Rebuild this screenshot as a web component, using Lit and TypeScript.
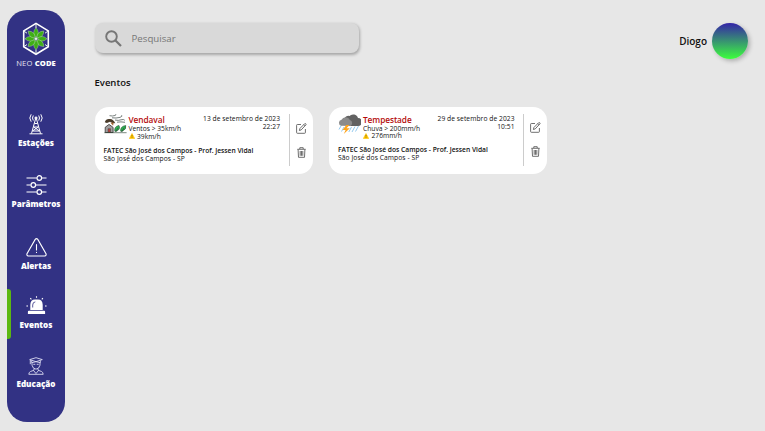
import { LitElement, html, svg, css } from "lit";
import { customElement, property } from "lit/decorators.js";

const icons: Record<string, unknown> = {
  logo: html`<svg width="28" height="34" viewBox="0 0 28 34" fill="none">
    <path d="M14 1.400 26.300 8.900v15.800L14 32.200 1.700 24.700V8.900Z" stroke="#fff" stroke-width="1.600" />
    <path d="M14 2v4M14 31.600v-4M2 24.500l3-2M2 9.200l3 2M26 9.200l-3 2M26 24.500l-3-2" stroke="#e8f3e8" />
    ${[0, 45, 90, 135, 180, 225, 270, 315].map(
      (a) => svg`<path transform="rotate(${a} 14 16.800)" d="M14 15.500Q9.300 11 14 5.800Q18.700 11 14 15.500Z" fill="#3faf16" stroke="#d5efc8" stroke-width=".35"/>`
    )}
    <circle cx="14" cy="16.800" r="1.300" fill="#e5f5df" />
  </svg>`,
  tower: html`<svg width="18" height="22" viewBox="0 0 18 22" fill="none" stroke="#fff" stroke-width="1">
    <circle cx="9" cy="5" r="1.100" fill="#fff" />
    <path d="M6.300 2.500Q4.700 5 6.300 7.500M11.700 2.500Q13.300 5 11.700 7.500M4.200 1.300Q1.400 5 4.200 8.700M13.800 1.300Q16.600 5 13.800 8.700" />
    <path d="M8.500 6 4.500 20.500M9.500 6 13.500 20.500M7.500 10.500h3M6.600 14h4.800M6.600 14l5.900 4M11.400 14l-5.900 4M5.500 18h7M2.500 20.800h13" />
  </svg>`,
  sliders: html`<svg width="21" height="20" viewBox="0 0 21 20" fill="none" stroke="#fff" stroke-width="1.200">
    <path d="M.5 3h10.300M15.800 3h4.700M.5 10h4.300M9.800 10h10.700M.5 17h10.300M15.800 17h4.700" />
    <circle cx="13.300" cy="3" r="2.300" /><circle cx="7.300" cy="10" r="2.300" /><circle cx="13.300" cy="17" r="2.300" />
  </svg>`,
  alert: html`<svg width="21" height="19" viewBox="0 0 21 19" fill="none" stroke="#fff" stroke-width="1.100" stroke-linecap="round">
    <path d="M9.200 1.400Q10.500-.1 11.800 1.400L20 15.700Q20.600 17.700 18.700 18H2.300Q.4 17.700 1 15.700Z" /><path d="M10.500 6.500v5.500M10.500 14.300v.2" />
  </svg>`,
  siren: html`<svg width="21" height="19" viewBox="0 0 21 19" fill="#fff">
    <path d="M2.900 14.800h15.200a1 1 0 0 1 1 1V18H1.900v-2.200a1 1 0 0 1 1-1ZM4.300 14.100V8.700Q4.500 3.700 9 3.600h3Q16.500 3.700 16.700 8.700v5.400Z" />
    <path d="M6.700 11.500V9Q6.700 6.100 9.300 5.900" stroke="#323284" stroke-width=".8" fill="none" />
    <path d="M10.500.2v1.500M4.300 2.200l1.100 1.200M16.900 2.200l-1.100 1.200M.4 10H2M19 10h1.600" stroke="#fff" stroke-width="1.100" />
  </svg>`,
  student: html`<svg width="16" height="18" viewBox="0 0 16 18" fill="none" stroke="#dcdcf2" stroke-width=".9">
    <path d="M1.700 2.600 8 .7l6.300 1.900L8 4.700ZM3.700 3.500v2.200Q8 3.700 12.300 5.700V3.500M2.300 3v4.200M4 5.500v2.700Q4.700 11.700 8 12.200 11.300 11.700 12 8.200V5.500M5.300 7.300h2M8.700 7.300h2M6 11.500v1.700L2.500 14.500Q.9 15.200.8 17.300h14.400Q15 15.200 13.500 14.500L10 13.200v-1.700M5.500 13.500 8 16.500l2.500-3" />
  </svg>`,
  search: html`<svg width="17" height="17" viewBox="0 0 17 17" fill="none" stroke="#767676" stroke-width="1.900">
    <circle cx="6.500" cy="6.500" r="5.300" /><path d="m10.500 10.500 5.500 5.500" stroke-width="2.200" />
  </svg>`,
  edit: html`<svg width="11" height="11" viewBox="0 0 11 11" fill="none" stroke="#555" stroke-width=".85">
    <path d="M5 1.500H1.400Q.6 1.500.6 2.300v7.200q0 .8.800.8h7.200q.8 0 .8-.8V6" /><path d="m3.400 7.500.5-2L8.700.7q.6-.4 1.100.1t.1 1.100L5.200 6.900ZM7.800 1.600l1.300 1.300" />
  </svg>`,
  trash: html`<svg width="9" height="11" viewBox="0 0 9 11" fill="none" stroke="#555" stroke-width=".85">
    <path d="M.3 2.300h8.400M2.800 2V.7h3.400V2M1.100 2.500l.4 7.800h6l.4-7.800M3.200 4v4.800M4.500 4v4.800M5.800 4v4.800" />
  </svg>`,
  warning: html`<svg width="6" height="6" viewBox="0 0 6 6"><path d="M3 .5 5.700 5.500H.3Z" fill="#ffc400" stroke="#ffc400" stroke-width=".6" stroke-linejoin="round" /><path d="M3 1.900v1.700M3 4.200v.7" stroke="#4b3b08" stroke-width=".5" /></svg>`,
  wind: html`<svg width="23" height="20" viewBox="0 0 23 20" fill="none">
    <path d="M5.500 1.700q3 .7 5.500-.2 1.600-.9.700-1.300M8 3.800q4 .6 8-.4 2.600-.9 1.700-2.200M11 6q3.500.9 6-.2 2.800-.9 3.800.5M13 8.200q4-.7 8 .1" stroke="#56605d" stroke-width=".8" />
    <path d="M.8 8.200Q2 4.400 6 5.100q3.500.2 5.300 4.100L8.300 9.100 6 7.800 2.900 9.100Z" fill="#4a3c2b" />
    <path d="m6.500 8.800 3.200-.3-.6 3.300Z" fill="#a36635" />
    <path d="M1.200 18.500v-5.200L5 10.400l4.100 3v5.100Z" fill="#a3a0a0" stroke="#333" stroke-width=".8" />
    <path d="M4 18.300v-3.600h2.500v3.600Z" fill="#b4423b" stroke="#444" stroke-width=".5" />
    <path d="M10.800 17.200Q10 12.500 15 11.500q1.800 3.700-2.500 5.700ZM16.700 17.200Q16 12.500 21.700 11.500q1.200 3.700-3.400 5.700Z" fill="#2eb352" stroke="#234e32" stroke-width=".6" />
    <path d="m11.500 18 2.700-4.300M17.500 18l2.700-4.300M.3 18.700h22.300" stroke="#263d2b" stroke-width=".6" />
  </svg>`,
  storm: html`<svg width="23" height="21" viewBox="0 0 23 21">
    <path d="M3.500 11 1 15.500M6 13l-2.500 4.500M13.500 13l-2.700 5M17 12.500l-3 5.500M20.500 12l-3 5.500" stroke="#76bbea" stroke-width=".8" />
    <path d="M7 8a4 4 0 0 1 4.600-6A5 5 0 0 1 20 4a4 4 0 0 1-.3 8H9Z" fill="#626262" />
    <path d="M3.300 11.700a3 3 0 0 1 .2-5.900A4.600 4.600 0 0 1 11.900 6a3.200 3.200 0 0 1 .6 5.900Z" fill="#8b8b8b" />
    <path d="m8.300 10.900-3.700 5h3L5.800 20l6-5.700H8.600l2.800-3.400Z" fill="#ffa51d" />
  </svg>`,
};

@customElement("station-sidebar")
class StationSidebar extends LitElement {
  static styles = css`
    :host { display: block; box-sizing: border-box; width: 58px; height: 411.500px; padding-top: 12px; border-radius: 20px; overflow: hidden; background: #323284; color: #fff; }
    svg { display: block; }
    .brand { display: flex; flex-direction: column; align-items: center; height: 73px; }
    .name { margin-top: 1.500px; font-size: 7.600px; line-height: 11px; letter-spacing: .2px; white-space: nowrap; color: #e2e2f0; }
    .name b { color: #fff; font-weight: 800; letter-spacing: .1px; }
    .item { position: relative; display: flex; flex-direction: column; align-items: center; justify-content: flex-end; box-sizing: border-box; height: 59px; gap: 4px; }
    .label { font-weight: 800; font-size: 8.100px; line-height: 12px; white-space: nowrap; }
    .estacoes { gap: 2px; height: 54px; }
    .parametros { height: 61px; gap: 3px; }
    .alertas { height: 62px; gap: 3.500px; }
    .educacao { gap: 3px; }
    .marker { position: absolute; left: 0; bottom: -8px; width: 3.500px; height: 50px; border-radius: 0 3px 3px 0; background: #5cb811; }
  `;
  render() {
    const items = [
      ["estacoes", "tower", "Estações"],
      ["parametros", "sliders", "Parâmetros"],
      ["alertas", "alert", "Alertas"],
      ["eventos", "siren", "Eventos"],
      ["educacao", "student", "Educação"],
    ];
    return html`<div class="brand">${icons.logo}<div class="name">NEO <b>CODE</b></div></div>
      <nav>${items.map(([key, icon, label]) => html`<div class="item ${key}">${key === "eventos" ? html`<i class="marker"></i>` : ""}${icons[icon]}<span class="label">${label}</span></div>`)}</nav>`;
  }
}

@customElement("event-card")
class EventCard extends LitElement {
  @property() icon = "";
  @property() name = "";
  @property() condition = "";
  @property() reading = "";
  @property() date = "";
  @property() time = "";
  static styles = css`
    :host { display: flex; box-sizing: border-box; width: 218px; height: 67px; padding: 7px 0 7px 9px; border-radius: 14px; background: #fff; color: #111; font-size: 6.700px; line-height: 8px; white-space: nowrap; }
    svg { display: block; }
    .body { display: flex; flex-direction: column; width: 177px; }
    .top { display: flex; height: 32.500px; }
    .picture { width: 25px; }
    .name { color: #b40b0b; font-size: 8.300px; font-weight: 600; line-height: 10px; margin-top: 1px; letter-spacing: -.08px; }
    .reading { display: flex; align-items: center; gap: 2.500px; line-height: 7px; margin-top: -.5px; }
    .when { margin: 1px 0 0 auto; text-align: right; letter-spacing: .06px; }
    .place { font-weight: 600; }
    .city { letter-spacing: .08px; }
    .actions { display: flex; flex-direction: column; align-items: center; gap: 13px; box-sizing: border-box; width: 24px; height: 52px; margin-left: 8.500px; padding-top: 8.500px; border-left: 1px solid #ccc; }
  `;
  render() {
    return html`<div class="body">
        <div class="top">
          <div class="picture">${icons[this.icon]}</div>
          <div><div class="name">${this.name}</div><div>${this.condition}</div><div class="reading">${icons.warning}<span>${this.reading}</span></div></div>
          <div class="when"><div class="date">${this.date}</div><div>${this.time}</div></div>
        </div>
        <div class="place">FATEC São José dos Campos - Prof. Jessen Vidal</div>
        <div class="city">São José dos Campos - SP</div>
      </div>
      <div class="actions">${icons.edit}${icons.trash}</div>`;
  }
}

@customElement("app-root")
class AppRoot extends LitElement {
  static styles = css`
    :host { display: flex; box-sizing: border-box; width: 765px; height: 431px; padding: 10px 0 0 7px; overflow: hidden; background: #e7e7e7; font-family: "Open Sans", "Noto Sans", sans-serif; }
    svg { display: block; }
    main { flex: 1; padding: 12.500px 17px 0 29.500px; }
    header { display: flex; align-items: flex-start; justify-content: space-between; height: 51.500px; }
    .search { display: flex; align-items: center; gap: 10px; box-sizing: border-box; width: 264.500px; height: 30.500px; padding: 1px 0 0 10px; border-radius: 8px; background: #d9d9d9; box-shadow: 1px 1.500px 3px rgba(0,0,0,.28); color: #767676; font-size: 9.700px; }
    .user { display: flex; align-items: center; gap: 5px; margin-top: .5px; font-size: 10px; font-weight: 600; color: #111; }
    .avatar { width: 36px; height: 36px; border-radius: 50%; background: linear-gradient(#3424a8, #3cff3c); box-shadow: 2px 2px 4px rgba(0,0,0,.25); }
    h1 { margin: 0; font-size: 9.500px; font-weight: 600; line-height: 17px; height: 32.500px; color: #111; }
    .cards { display: flex; align-items: flex-start; gap: 16.500px; }
    .lower { margin-top: .7px; }
  `;
  render() {
    return html`<station-sidebar></station-sidebar>
      <main>
        <header>
          <div class="search">${icons.search}<span>Pesquisar</span></div>
          <div class="user"><span>Diogo</span><div class="avatar"></div></div>
        </header>
        <h1>Eventos</h1>
        <div class="cards">
          <event-card class="lower" icon="wind" name="Vendaval" condition="Ventos &gt; 35km/h" reading="39km/h" date="13 de setembro de 2023" time="22:27"></event-card>
          <event-card icon="storm" name="Tempestade" condition="Chuva &gt; 200mm/h" reading="276mm/h" date="29 de setembro de 2023" time="10:51"></event-card>
        </div>
      </main>`;
  }
}
